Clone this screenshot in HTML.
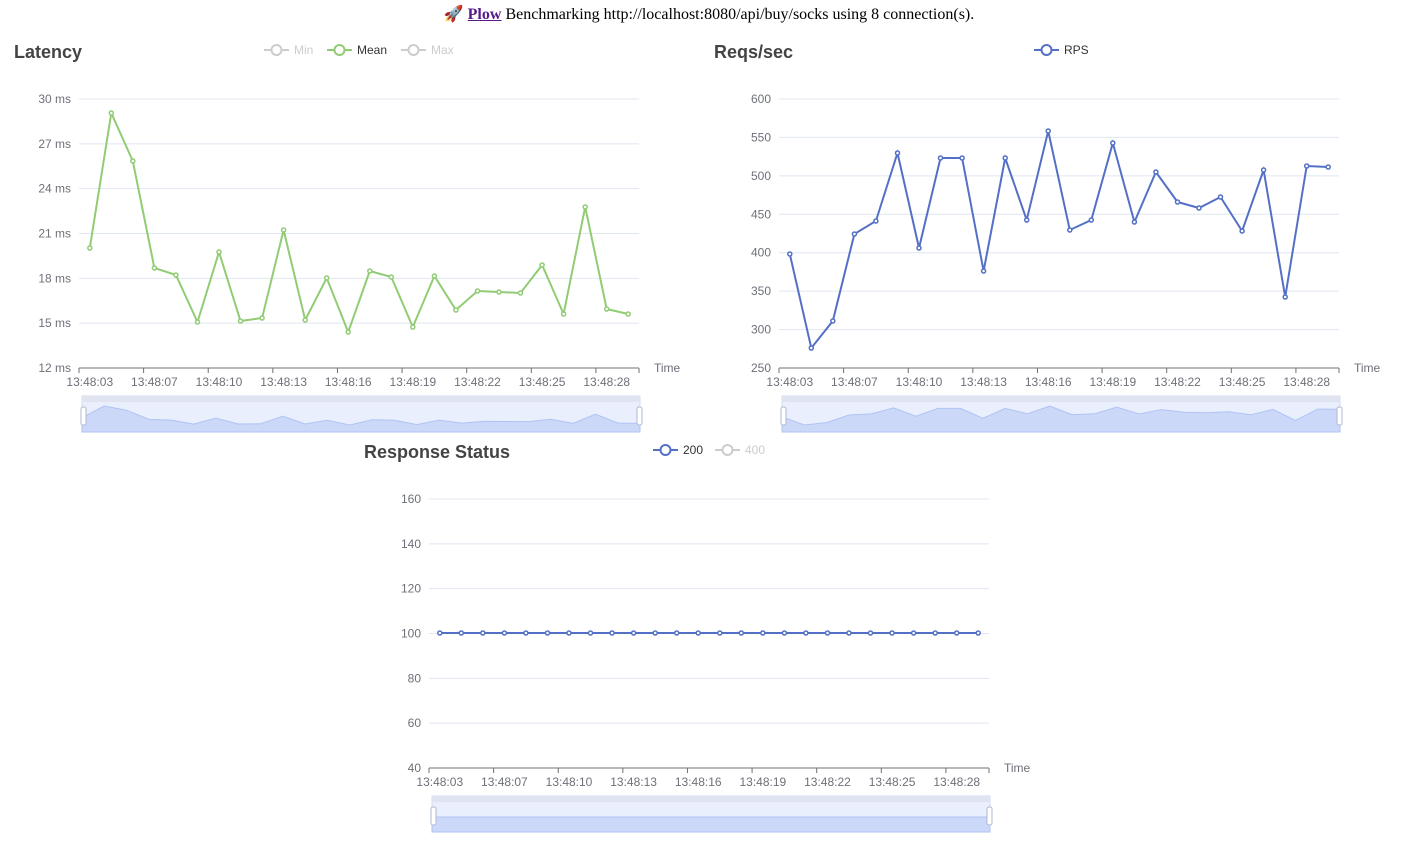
<!DOCTYPE html>
<html><head><meta charset="utf-8"><style>
body{margin:0;width:1402px;height:847px;background:#fff;overflow:hidden;font-family:"Liberation Sans",sans-serif}
#hdr{position:absolute;top:4px;left:0;width:1402px;text-align:center;font-family:"Liberation Serif",serif;font-size:16px;color:#000;padding-left:16px;box-sizing:border-box}
#hdr a{color:#551a8b;font-weight:bold;text-decoration:underline}
svg{position:absolute;left:0;top:0}
</style></head><body>
<div id="hdr">🚀 <a>Plow</a> Benchmarking http://localhost:8080/api/buy/socks using 8 connection(s).</div>
<svg id="s" width="1402" height="847" font-family="Liberation Sans, sans-serif" font-size="12"></svg>
<script>
var s=document.getElementById('s'),h='';
var labs=['13:48:03','13:48:07','13:48:10','13:48:13','13:48:16','13:48:19','13:48:22','13:48:25','13:48:28'];
function chart(x0,ytop,ybot,ylabels,pts,color,title,tx,ty,zoomY){
 var w=560,band=w/26,n=ylabels.length,step=(ybot-ytop)/(n-1);
 for(var i=0;i<n;i++){var y=ytop+i*step;
  if(i<n-1)h+='<line x1="'+x0+'" x2="'+(x0+w)+'" y1="'+y+'" y2="'+y+'" stroke="#e0e6f1"/>';
  h+='<text x="'+(x0-8)+'" y="'+(y+4)+'" fill="#6e7079" text-anchor="end">'+ylabels[i]+'</text>';}
 h+='<line x1="'+x0+'" x2="'+(x0+w)+'" y1="'+ybot+'" y2="'+ybot+'" stroke="#6e7079"/>';
 for(var k=0;k<=9;k++){var tx2=x0+k*3*band; if(k==9)tx2=x0+w;
  h+='<line x1="'+tx2+'" x2="'+tx2+'" y1="'+ybot+'" y2="'+(ybot+5)+'" stroke="#6e7079"/>';}
 labs.forEach(function(l,k){h+='<text x="'+(x0+band/2+k*3*band)+'" y="'+(ybot+18)+'" fill="#6e7079" text-anchor="middle">'+l+'</text>';});
 h+='<text x="'+(x0+w+15)+'" y="'+(ybot+4)+'" fill="#6e7079">Time</text>';
 var p=pts.map(function(y,i){return (x0+band/2+i*band).toFixed(1)+','+y}).join(' ');
 h+='<polyline points="'+p+'" fill="none" stroke="'+color+'" stroke-width="2"/>';
 pts.forEach(function(y,i){h+='<circle cx="'+(x0+band/2+i*band).toFixed(1)+'" cy="'+y+'" r="2" fill="#fff" stroke="'+color+'" stroke-width="1.5"/>';});
 h+='<text x="'+tx+'" y="'+ty+'" fill="#444" font-size="18" font-weight="bold">'+title+'</text>';
 var zx=x0+3,zw=558,zy=zoomY;
 h+='<rect x="'+zx+'" y="'+zy+'" width="'+zw+'" height="36" fill="#e9effd" stroke="#d2dbee"/>';
 h+='<rect x="'+zx+'" y="'+zy+'" width="'+zw+'" height="6" fill="#dfe4f0"/>';
 var mn=Math.min.apply(0,pts),mx=Math.max.apply(0,pts),rg=(mx-mn)||1;
 var mp=pts.map(function(y,i){var yy=mx==mn?zy+21:zy+10+(y-mn)/rg*19;return (zx+i*zw/25).toFixed(1)+','+yy.toFixed(1)});
 h+='<polygon points="'+zx+','+(zy+36)+' '+mp.join(' ')+' '+(zx+zw)+','+(zy+36)+'" fill="#ccd8f8" stroke="#b0c3f3"/>';
 [zx-1,zx+zw-3].forEach(function(hx){h+='<rect x="'+hx+'" y="'+(zy+11)+'" width="5" height="18" rx="2" fill="#fff" stroke="#acb8d1"/>';});
}
chart(79,99,368,['30 ms','27 ms','24 ms','21 ms','18 ms','15 ms','12 ms'],
 [248,113,161,268,275,322,252,321,318,230,320,278,332,271,277,327,276,310,291,292,293,265,314,207,309,314],'#91cc75','Latency',14,58,396);
chart(779,99,368,['600','550','500','450','400','350','300','250'],
 [254,348,321,234,221,153,248,158,158,271,158,220,131,230,220,143,222,172,202,208,197,231,170,297,166,167],'#5470c6','Reqs/sec',714,58,396);
var f=[];for(var i=0;i<26;i++)f.push(633);
chart(429,499,768,['160','140','120','100','80','60','40'],f,'#5470c6','Response Status',364,458,796);
function leg(x,y,c,t,tc){h+='<line x1="'+x+'" x2="'+(x+25)+'" y1="'+y+'" y2="'+y+'" stroke="'+c+'" stroke-width="2"/><circle cx="'+(x+12.5)+'" cy="'+y+'" r="5" fill="#fff" stroke="'+c+'" stroke-width="2"/><text x="'+(x+30)+'" y="'+(y+4)+'" fill="'+tc+'">'+t+'</text>';}
leg(264,50,'#ccc','Min','#ccc');leg(327,50,'#91cc75','Mean','#333');leg(401,50,'#ccc','Max','#ccc');
leg(1034,50,'#5470c6','RPS','#333');
leg(653,450,'#5470c6','200','#333');leg(715,450,'#ccc','400','#ccc');
s.innerHTML=h;
</script>
</body></html>
